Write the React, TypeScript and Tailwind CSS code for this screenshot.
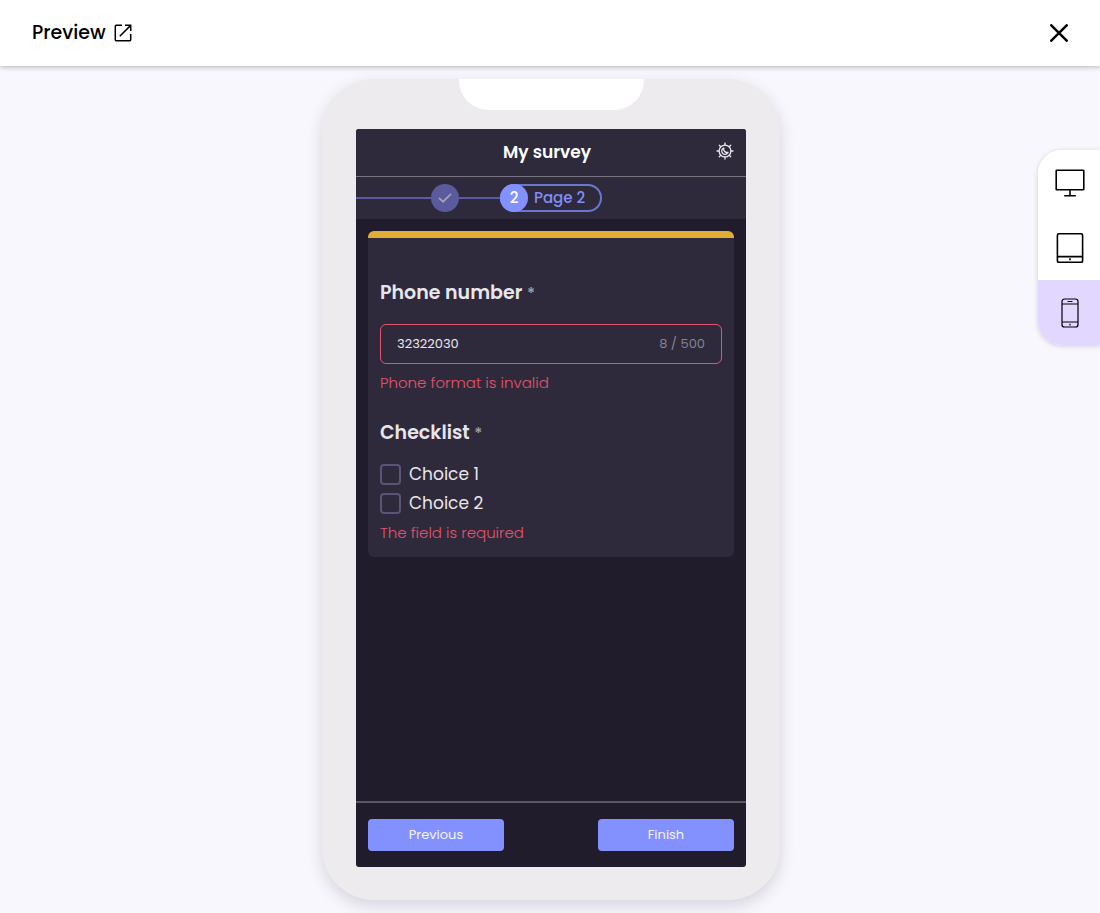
import { useState } from "react";

type Device = "desktop" | "tablet" | "mobile";

function ExternalIcon() {
  return (
    <svg viewBox="0 0 18 18" className="size-[18px]" fill="none" stroke="currentColor" strokeWidth="1.5" aria-hidden="true">
      <path d="M8 1.3H2.2a.9.9 0 0 0-.9.9v13.6a.9.9 0 0 0 .9.9h13.6a.9.9 0 0 0 .9-.9V10" />
      <path d="M5.8 12.2 16.4 1.6M11 1.3h5.7V7" />
    </svg>
  );
}

function CloseIcon() {
  return (
    <svg viewBox="0 0 18 18" className="size-[18px]" fill="none" stroke="currentColor" strokeWidth="2.5" strokeLinecap="round" aria-hidden="true">
      <path d="M1.3 1.3 16.7 16.7M16.7 1.3 1.3 16.7" />
    </svg>
  );
}

function ThemeIcon() {
  return (
    <svg viewBox="0 0 18 18" className="size-[18px]" fill="none" stroke="currentColor" strokeWidth="1.3" strokeLinecap="round" strokeLinejoin="round" aria-hidden="true">
      <circle cx="9" cy="9" r="5.9" />
      <path d="M9 3V1M9 17v-2M3 9H1M17 9h-2M4.7 4.7 3.3 3.3M14.7 3.3l-1.4 1.4M4.7 13.3l-1.4 1.4M14.7 14.7l-1.4-1.4" />
      <path d="M7.8 6a3.3 3.3 0 1 0 4.3 4.3A3.4 3.4 0 0 1 7.8 6z" />
    </svg>
  );
}

function DesktopIcon() {
  return (
    <svg viewBox="0 0 30 30" className="size-[30px]" fill="none" stroke="currentColor" strokeWidth="1.6" aria-hidden="true">
      <rect x="1.2" y="2.2" width="27.6" height="19.6" rx="0.6" />
      <path d="M15 22v5.8M9.2 27.8h11.6" />
    </svg>
  );
}

function TabletIcon() {
  return (
    <svg viewBox="0 0 30 30" className="size-[30px]" fill="none" stroke="currentColor" strokeWidth="1.6" aria-hidden="true">
      <rect x="2.4" y="0.8" width="25.2" height="28.6" rx="1.6" />
      <path d="M2.4 23.6h25.2M15 25.2v2" />
    </svg>
  );
}

function MobileIcon() {
  return (
    <svg viewBox="0 0 30 30" className="size-[30px]" fill="none" stroke="currentColor" strokeWidth="1.2" aria-hidden="true">
      <rect x="7" y="1" width="16" height="28" rx="2.6" />
      <path d="M7 6h16M7 24h16M12.6 3.5h4.8M15 25.8v1.6" />
    </svg>
  );
}

const devices: { id: Device; label: string; icon: () => React.JSX.Element }[] = [
  { id: "desktop", label: "Desktop", icon: DesktopIcon },
  { id: "tablet", label: "Tablet", icon: TabletIcon },
  { id: "mobile", label: "Mobile", icon: MobileIcon },
];

const choices = ["Choice 1", "Choice 2"];

function Stepper() {
  return (
    <nav aria-label="Pages" className="flex h-[42px] items-center bg-[#2f2a3b]">
      <span className="h-0.5 w-[75px] bg-[#5a59a3]" />
      <button type="button" aria-label="Page 1" className="flex size-7 items-center justify-center rounded-full bg-[#5a5a9e]">
        <svg viewBox="0 0 14 10" className="h-2.5 w-3.5" fill="none" stroke="#a5a5aa" strokeWidth="1.7" aria-hidden="true">
          <path d="M1 4.8 5 8.7 13 .9" />
        </svg>
      </button>
      <span className="h-0.5 w-[41px] bg-[#5a59a3]" />
      <button type="button" aria-current="step" className="flex h-7 w-[102px] items-center rounded-full border-2 border-[#6b76cf] text-[15px] font-medium text-[#808dfa]">
        <span className="-my-0.5 -ml-0.5 flex size-7 shrink-0 items-center justify-center rounded-full bg-[#8391ff] text-white">2</span>
        <span className="pl-1.5 whitespace-nowrap">Page 2</span>
      </button>
    </nav>
  );
}

function QuestionTitle({ children }: { children: string }) {
  return (
    <>
      {children} <span className="text-base font-medium text-[#a19da8]">*</span>
    </>
  );
}

export default function App() {
  const [device, setDevice] = useState<Device>("mobile");
  const [phone, setPhone] = useState("32322030");

  return (
    <div className="relative flex min-h-screen flex-col bg-[#f8f7fd] font-['Poppins','Inter',sans-serif] text-black">
      <header className="z-10 flex h-[66px] items-center justify-between bg-white px-8 shadow-[0_1px_5px_rgba(0,0,0,0.28)]">
        <h1 className="text-[19px] font-medium">
          <a href="#preview" className="flex items-center gap-2">
            Preview
            <ExternalIcon />
          </a>
        </h1>
        <button type="button" aria-label="Close">
          <CloseIcon />
        </button>
      </header>

      <main className="flex flex-1 justify-center overflow-hidden py-[13px] pl-0.5">
        <section aria-label="Survey preview" className="flex min-h-[821px] w-full max-w-[458px] flex-col rounded-[52px] bg-[#edebee] px-[34px] pb-[33px] shadow-[0_6px_16px_rgba(40,35,60,0.16)]">
          <div className="mb-[19px] h-[31px] w-[185px] self-center rounded-b-[30px] bg-white" />
          <div className="flex flex-1 flex-col overflow-hidden rounded-[3px] bg-[#211c2c] text-[#e8e6ec]">
            <div className="grid h-12 grid-cols-[1fr_auto_1fr] items-center border-b border-[#77737f] bg-[#2f2a3b] pr-3 pl-1">
              <h2 className="col-start-2 text-[17px] font-semibold text-white">My survey</h2>
              <button type="button" aria-label="Switch theme" className="justify-self-end pb-1">
                <ThemeIcon />
              </button>
            </div>
            <Stepper />

            <form id="survey" className="flex flex-1 flex-col p-3" onSubmit={(e) => e.preventDefault()}>
              <div className="rounded-md border-t-[7px] border-[#e0ae34] bg-[#2f2a3b] px-3 pt-[41px] pb-3">
                <label htmlFor="phone" className="block text-[19px] leading-7 font-semibold">
                  <QuestionTitle>Phone number</QuestionTitle>
                </label>
                <div className="mt-[17px] flex h-10 items-center rounded-md border border-[#e2546d] px-4 text-[13px]">
                  <input
                    id="phone"
                    type="tel"
                    value={phone}
                    onChange={(e) => setPhone(e.target.value)}
                    aria-invalid="true"
                    aria-describedby="phone-error"
                    className="min-w-0 flex-1 bg-transparent outline-none"
                  />
                  <span className="text-[#85818e]">{phone.length} / 500</span>
                </div>
                <p id="phone-error" className="mt-[7px] text-[15px] leading-6 font-light text-[#e2546d]">Phone format is invalid</p>

                <fieldset className="mt-6" aria-describedby="choice-error">
                  <legend className="text-[19px] leading-7 font-semibold">
                    <QuestionTitle>Checklist</QuestionTitle>
                  </legend>
                  <div className="mt-[13px]">
                    {choices.map((choice) => (
                      <label key={choice} className="flex h-[29px] items-center gap-2 text-[17px]">
                        <input type="checkbox" className="size-[21px] appearance-none rounded-[4px] border-2 border-[#5b5478] checked:bg-[#8391ff]" />
                        {choice}
                      </label>
                    ))}
                  </div>
                </fieldset>
                <p id="choice-error" className="mt-[3px] text-[15px] leading-6 font-light text-[#e2546d]">The field is required</p>
              </div>
            </form>

            <div className="flex items-start justify-between border-t-2 border-[#5b5763] px-3 py-4">
              <button type="button" className="h-8 w-[136px] rounded-sm bg-[#8391ff] text-[13px] text-[#f3f3ff]">Previous</button>
              <button type="submit" form="survey" className="h-8 w-[136px] rounded-sm bg-[#8391ff] text-[13px] text-[#f3f3ff]">Finish</button>
            </div>
          </div>
        </section>
      </main>

      <aside aria-label="Device" className="absolute top-[150px] right-0 flex w-[62px] flex-col overflow-hidden rounded-l-3xl bg-white shadow-[0_1px_5px_rgba(40,35,60,0.2)]">
        {devices.map(({ id, label, icon: Icon }) => (
          <button
            key={id}
            type="button"
            aria-label={label}
            aria-pressed={device === id}
            onClick={() => setDevice(id)}
            className={`flex h-[65px] items-center justify-center pl-0.5 ${device === id ? "bg-[#e2d8ff]" : "bg-white"}`}
          >
            <Icon />
          </button>
        ))}
      </aside>
    </div>
  );
}
